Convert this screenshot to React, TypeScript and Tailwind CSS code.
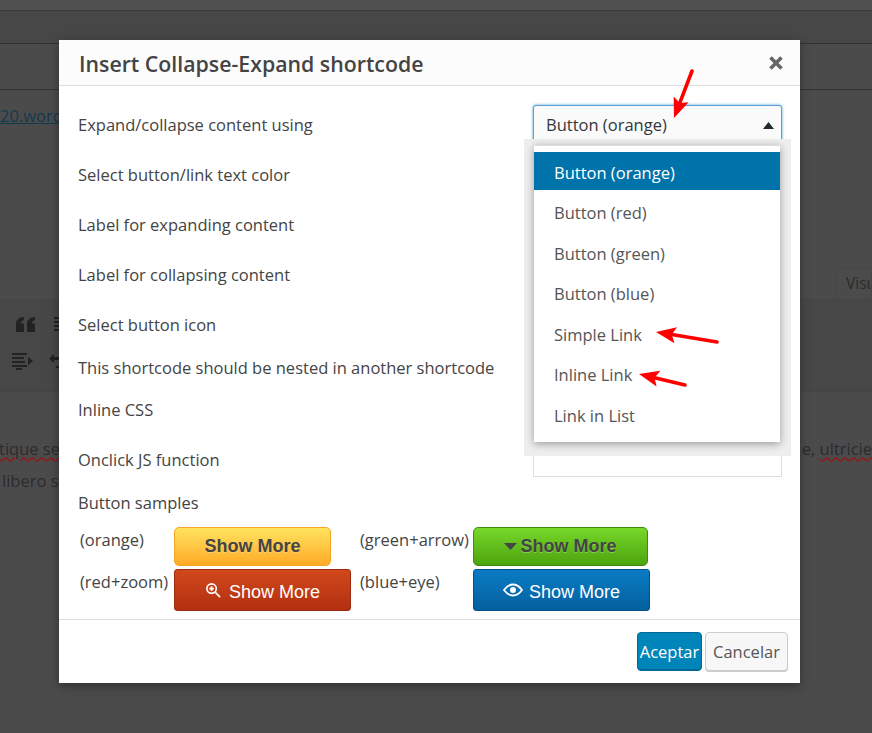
import React from 'react';

const font = { fontFamily: '"Open Sans", sans-serif' };

const options = ['Button (orange)', 'Button (red)', 'Button (green)', 'Button (blue)', 'Simple Link', 'Inline Link', 'Link in List'];

function Row({ label, className }: { label: string; className: string }) {
  return <div className={`flex items-center pl-[19px] text-[16.5px] text-[#444] ${className}`}>{label}</div>;
}

function RedArrow({ x1, y1, x2, y2 }: { x1: number; y1: number; x2: number; y2: number }) {
  const a = Math.atan2(y2 - y1, x2 - x1);
  const px = Math.cos(a), py = Math.sin(a);
  const bx = x2 - px * 20, by = y2 - py * 20;
  const nx = x2 - px * 16, ny = y2 - py * 16;
  const pts = `${x2},${y2} ${bx - py * 8},${by + px * 8} ${nx},${ny} ${bx + py * 8},${by - px * 8}`;
  return (
    <>
      <line x1={x1} y1={y1} x2={nx} y2={ny} stroke="#ff0000" strokeWidth="3.6" strokeLinecap="round" />
      <polygon points={pts} fill="#ff0000" />
    </>
  );
}

function EditorBackdrop() {
  return (
    <div className="w-full h-full flex flex-col bg-[#4b4b4b] text-[#2a2a2a]">
      <div className="h-[11px] bg-[#505050] border-b border-[#3a3a3a]" />
      <div className="h-[33px] bg-[#474747] border-b border-[#333]" />
      <div className="h-[46px] bg-[#4b4b4b] border-b border-[#333]" />
      <div className="h-[18px]" />
      <div className="text-[16.5px] h-[160px] underline text-[#123a4e] leading-[16px]">20.word</div>
      <div className="flex justify-end h-[32px] border-b border-[#464646]">
        <div className="w-[37px] h-[31px] border border-[#464646] border-b-0 pl-[10px] pt-[3px] text-[15.5px] overflow-hidden text-[#2c2c2c]">Visu</div>
      </div>
      <div className="relative h-[92px] bg-[#474747] border-b border-[#444] pl-[15px] pt-[16px]">
        <svg width="22" height="18" viewBox="0 0 22 18" fill="#222" className="block">
          <path d="M9 1v3c-2 .5-3 1.6-3 3.500h3V16H1V8C1 4 4 1 9 1zM20 1v3c-2 .5-3 1.6-3 3.500h3V16h-8V8c0-4 3-7 8-7z" />
        </svg>
        <svg width="22" height="18" viewBox="0 0 22 18" fill="#222" className="block mt-[18px] -ml-[3px]">
          <path d="M0 1h15v2H0zM0 5h12v2H0zM0 9h13v2H0zM0 13h15v2H0zM4 16h6v2H4zM16 5l5 4-5 4z" />
        </svg>
        <svg width="6" height="18" viewBox="0 0 6 18" fill="#222" className="absolute left-[54px] top-[16px]">
          <path d="M0 1h6v2H0zM0 5h6v2H0zM0 9h6v2H0zM0 13h6v2H0z" />
        </svg>
        <svg width="10" height="18" viewBox="0 0 10 18" fill="#222" className="absolute left-[49px] top-[52px]">
          <path d="M5 2v3h5v3H5v3L0 6.500zM7 14h3v2H7z" />
        </svg>
      </div>
      <div className="flex-1 text-[16.5px] text-[#2b2b2b] pt-[41px] leading-[32px]">
        <div className="flex justify-between whitespace-nowrap">
          <span className="-ml-[1px] underline decoration-wavy decoration-[#8a1c1c]">tique se</span>
          <span>e, <span className="underline decoration-wavy decoration-[#8a1c1c]">ultricie</span></span>
        </div>
        <div className="pl-[2px]">libero s</div>
      </div>
    </div>
  );
}

function Sample({ className, children }: { className: string; children: React.ReactNode }) {
  return <div className={`flex items-center justify-center text-[18px] whitespace-nowrap ${className}`} style={{ fontFamily: '"Liberation Sans", sans-serif' }}>{children}</div>;
}

export default function App() {
  return (
    <div className="relative w-[872px] h-[733px] overflow-hidden" style={font}>
      <EditorBackdrop />

      {/* modal */}
      <div className="absolute left-[59px] top-[40px] w-[741px] h-[643px] bg-white flex flex-col shadow-[0_3px_10px_rgba(0,0,0,0.35)]">
        <div className="h-[46px] shrink-0 bg-[#fcfcfc] border-b border-[#dddddd] flex items-center justify-between pl-[20px] pr-[16px]">
          <span className="text-[21.3px] font-semibold text-[#444] pt-[2px]">Insert Collapse-Expand shortcode</span>
          <svg width="16" height="16" viewBox="0 0 16 16">
            <path d="M2.500 2.500l11 11M13.500 2.500l-11 11" stroke="#666" strokeWidth="3.6" />
          </svg>
        </div>

        <div className="relative flex-1 flex flex-col pt-[14px]">
          <Row label="Expand/collapse content using" className="h-[50px]" />
          <Row label="Select button/link text color" className="h-[50px]" />
          <Row label="Label for expanding content" className="h-[50px]" />
          <Row label="Label for collapsing content" className="h-[50px]" />
          <Row label="Select button icon" className="h-[50px]" />
          <Row label="This shortcode should be nested in another shortcode" className="h-[36px]" />
          <Row label="Inline CSS" className="h-[48px]" />
          <Row label="Onclick JS function" className="h-[52px]" />
          <Row label="Button samples" className="h-[34px]" />

          <div className="grid grid-cols-[94px_186px_113px_177px] grid-rows-[42px_42px] pl-[21px] pt-[7px] text-[16.5px] text-[#444] h-[100px] border-b border-[#dddddd] whitespace-nowrap">
            <div className="pt-[1px]">(orange)</div>
            <Sample className="w-[157px] h-[39px] rounded-[5px] border border-[#f5a623] bg-gradient-to-b from-[#ffe35f] to-[#ffaa22] text-[#444] font-bold [text-shadow:0_1px_0_rgba(255,255,255,0.3)]">Show More</Sample>
            <div className="pt-[1px]">(green+arrow)</div>
            <Sample className="w-[175px] h-[39px] rounded-[5px] border border-[#3f8a0a] bg-gradient-to-b from-[#77d82a] to-[#4ca40c] text-[#444] font-bold gap-[3px] [text-shadow:0_1px_0_rgba(255,255,255,0.3)]">
              <svg width="13" height="7" viewBox="0 0 13 7" fill="#444"><path d="M0 0h13L6.500 7z" /></svg>
              Show More
            </Sample>
            <div className="pt-[1px]">(red+zoom)</div>
            <Sample className="w-[177px] h-[42px] rounded-[3px] border border-[#9c2c10] bg-gradient-to-b from-[#d1481c] to-[#b22f10] text-white gap-[8px] pt-[4px]">
              <svg width="16" height="16" viewBox="0 0 17 17" fill="none" stroke="#fff" strokeWidth="1.8" className="-mt-[5px]">
                <circle cx="7" cy="7" r="5" />
                <path d="M11 11l5 5M4.500 7h5M7 4.500v5" />
              </svg>
              Show More
            </Sample>
            <div className="pt-[1px]">(blue+eye)</div>
            <Sample className="w-[177px] h-[42px] rounded-[3px] border border-[#04508c] bg-gradient-to-b from-[#0a7cc4] to-[#04609f] text-white gap-[6px] pt-[4px]">
              <svg width="20" height="14" viewBox="0 0 20 14" fill="none" stroke="#fff" strokeWidth="1.8" className="-mt-[4px]">
                <path d="M1 7c2.500-3.500 5.500-5.500 9-5.500S16.500 3.500 19 7c-2.500 3.500-5.500 5.500-9 5.500S3.500 10.500 1 7z" />
                <circle cx="10" cy="7" r="3" fill="#fff" stroke="none" />
              </svg>
              Show More
            </Sample>
          </div>

          <div className="flex-1 flex items-start justify-end gap-[3px] pt-[12px] pr-[12px]">
            <button className="w-[65px] h-[39px] rounded-[4px] border border-[#006799] bg-[#0085ba] text-white text-[16.5px] pt-[1px] shadow-[inset_0_-1px_0_#006799]">Aceptar</button>
            <button className="w-[83px] h-[39px] rounded-[4px] border border-[#cccccc] bg-[#f7f7f7] text-[#555] text-[16.5px] pt-[1px] shadow-[0_1px_0_#cccccc]">Cancelar</button>
          </div>

          {/* select with its open list */}
          <div className="absolute left-[474px] top-[19px] w-[249px] h-[45px] rounded-[3px] border border-[#5b9dd9] bg-[#fafafa] shadow-[0_0_3px_rgba(30,140,190,0.8)] flex items-center justify-between pl-[12px] pr-[7px] pb-[5px] text-[16.5px] text-[#32373c]">
            <span>Button (orange)</span>
            <svg width="11" height="7" viewBox="0 0 11 7" fill="#23282d"><path d="M5.500 0L11 7H0z" /></svg>
          </div>
          <div className="absolute left-[474px] top-[340px] w-[249px] h-[51px] border border-[#dddddd]" />
          <div className="absolute left-[465px] top-[53px] w-[267px] h-[317px] bg-[#eeeeee] pl-[10px] pr-[11px] pt-[6px]">
            <div className="h-[297px] bg-white border-t border-[#dddddd] pt-[6px] shadow-[0_2px_8px_rgba(0,0,0,0.35)]">
              {options.map((o, i) => (
                <div key={o} className={i === 0 ? 'h-[38px] flex items-center pl-[20px] pt-[4px] text-[16.5px] bg-[#0073aa] text-white' : 'h-[40.5px] flex items-center pl-[20px] pt-[7px] text-[16.5px] text-[#555]'}>{o}</div>
              ))}
            </div>
          </div>
        </div>
      </div>

      {/* red annotation arrows */}
      <svg className="absolute left-0 top-0 pointer-events-none" width="872" height="733">
        <RedArrow x1={692} y1={71} x2={674} y2={118} />
        <RedArrow x1={717} y1={342} x2={656} y2={332} />
        <RedArrow x1={685} y1={385} x2={639} y2={374} />
      </svg>
    </div>
  );
}
